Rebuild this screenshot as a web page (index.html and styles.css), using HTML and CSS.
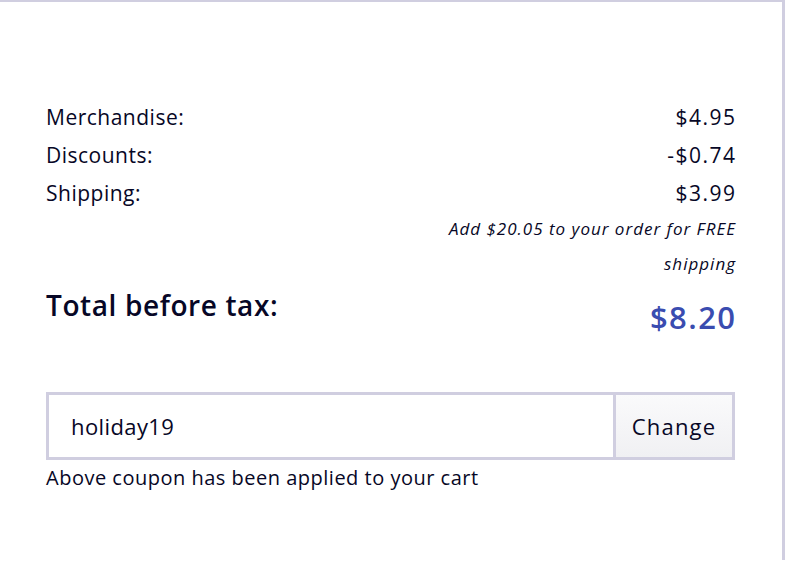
FILE: index.html
```html
<!DOCTYPE html>
<html>

<head>
    <title>Order Summary</title>
    <meta charset="utf-8">
    <meta name="viewport" content="width=device-width, initial-scale=1">
    <link rel="stylesheet" href="styles.css">
</head>

<body>
    <div class="summary-wrapper">
        <ul class="summary-lines">
            <li class="summary-line"><span>Merchandise:</span><span class="line-price">$4.95</span></li>
            <li class="summary-line"><span>Discounts:</span><span class="line-price">-$0.74</span></li>
            <li class="summary-line"><span>Shipping:</span><span class="line-price">$3.99</span></li>
        </ul>
        <p class="shipping-note">Add $20.05 to your order for FREE<br>shipping</p>
        <div class="summary-total">
            <span class="total-label">Total before tax:</span>
            <span class="total-price">$8.20</span>
        </div>
        <form class="coupon-form">
            <input class="coupon-input" type="text" value="holiday19">
            <button class="coupon-btn" type="button">Change</button>
        </form>
        <p class="coupon-msg">Above coupon has been applied to your cart</p>
    </div>
</body>

</html>
```

FILE: styles.css
```css
body,
html {
    font-family: 'Open Sans', sans-serif;
    margin: 0;
    padding: 0;
    color: #070726;
    background-color: #ffffff;
}

.summary-wrapper {
    width: 785px;
    min-height: 560px;
    padding: 96px 47px 0 46px;
    box-sizing: border-box;
    border-top: 2px solid #d0cee0;
    border-right: 3px solid #d0cee0;
}

.summary-lines {
    list-style-type: none;
    margin: 0;
    padding: 0;
}

.summary-line {
    display: flex;
    justify-content: space-between;
    font-size: 21px;
    letter-spacing: 0.5px;
    line-height: 38px;
}

.line-price {
    letter-spacing: 1.5px;
    margin-right: -1.5px;
}

.shipping-note {
    margin: -1px -1px 0 0;
    text-align: right;
    font-style: italic;
    font-size: 17px;
    letter-spacing: 1px;
    line-height: 35px;
}

.summary-total {
    display: flex;
    justify-content: space-between;
    align-items: flex-start;
    margin-top: 4px;
}

.total-label {
    font-size: 28px;
    font-weight: 600;
    letter-spacing: 0.6px;
    line-height: 40px;
}

.total-price {
    font-size: 31px;
    font-weight: 600;
    letter-spacing: 1.4px;
    margin-right: -1.4px;
    line-height: 40px;
    padding-top: 12px;
    color: #3a4cb0;
}

.coupon-form {
    display: flex;
    margin: 55px 0 0;
    height: 68px;
}

.coupon-input {
    flex-grow: 1;
    min-width: 0;
    border: 3px solid #d0cee0;
    padding: 0 22px;
    font-family: inherit;
    font-size: 22px;
    letter-spacing: 0.4px;
    color: #070726;
    outline: none;
}

.coupon-btn {
    width: 119px;
    padding: 0;
    border: 3px solid #d0cee0;
    border-left: none;
    background: linear-gradient(#fafafb, #f0f0f3);
    font-family: inherit;
    font-size: 22px;
    letter-spacing: 1.2px;
    color: #070726;
    cursor: pointer;
}

.coupon-msg {
    margin: 6px 0 0;
    font-size: 20px;
    letter-spacing: 0.5px;
    line-height: 24px;
}
```
